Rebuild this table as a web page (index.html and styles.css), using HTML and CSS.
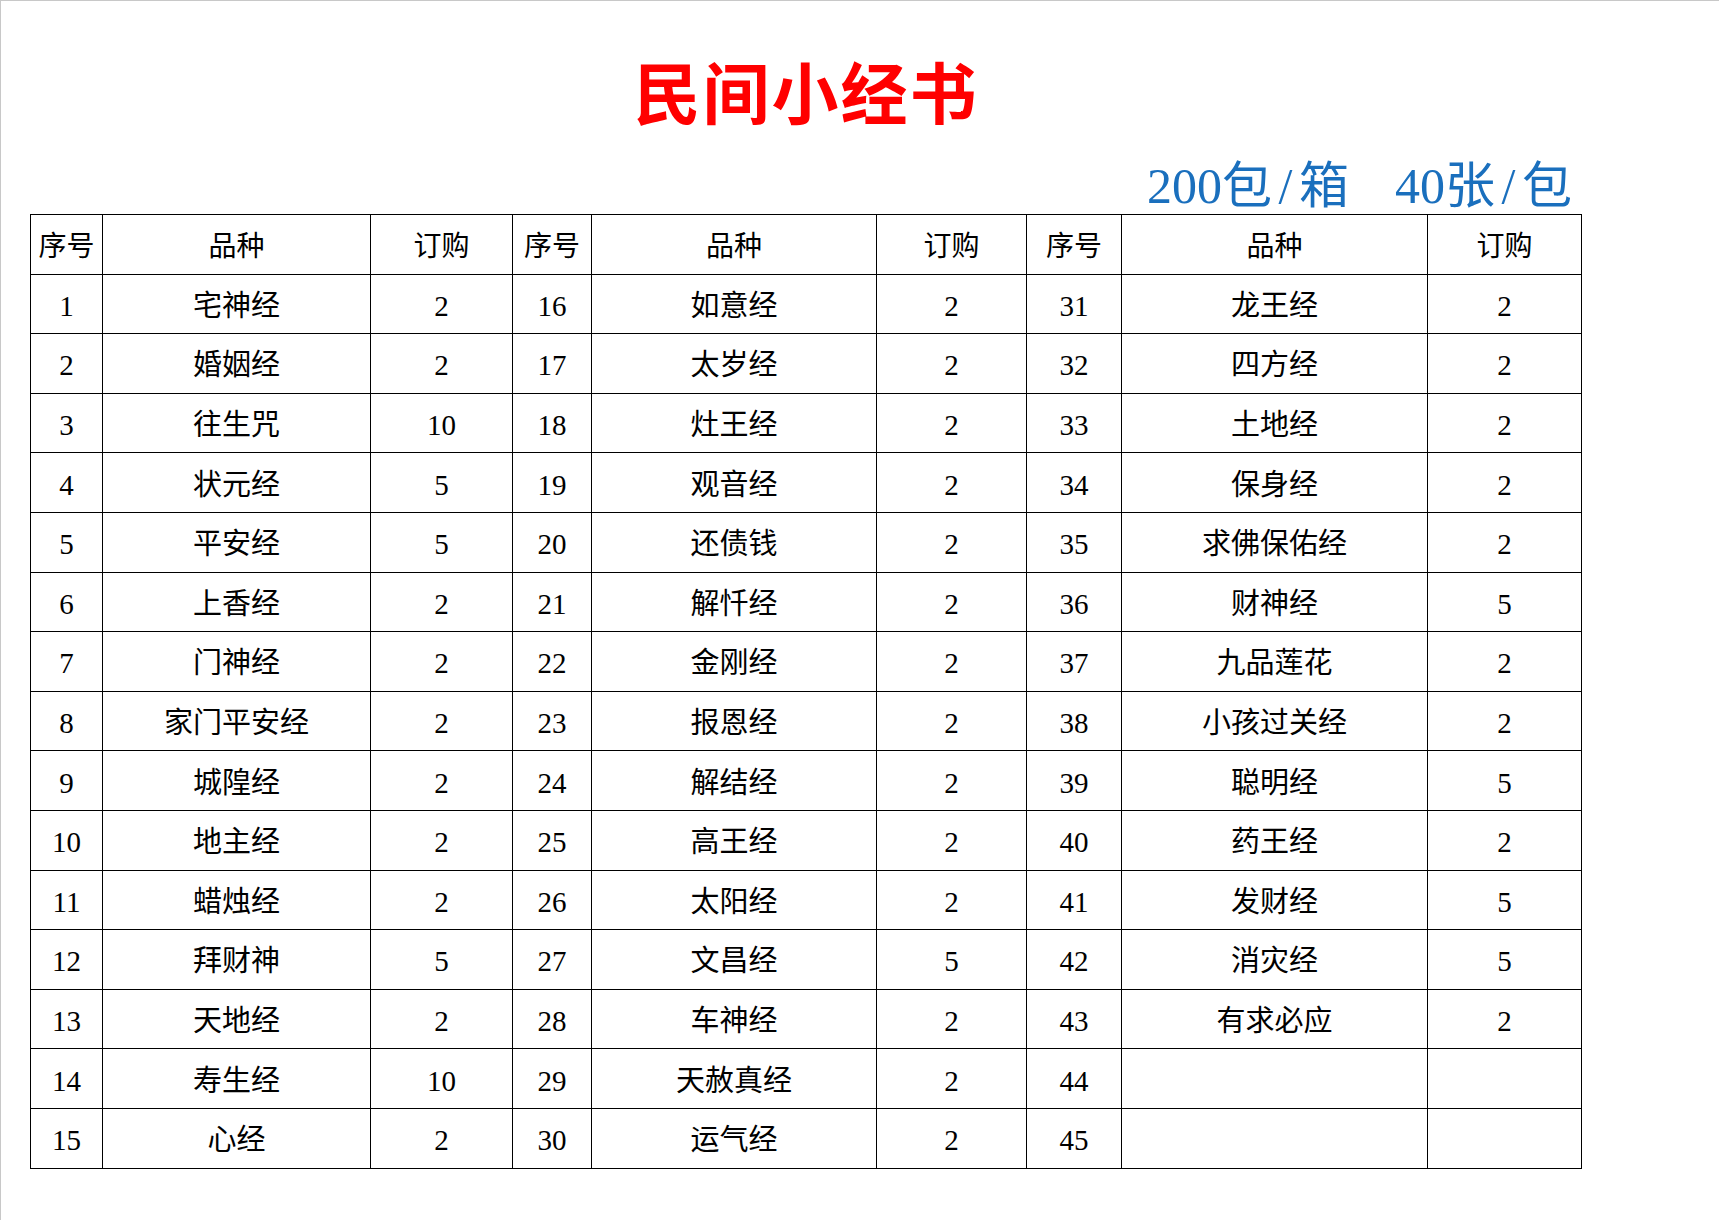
FILE: index.html
```html
<!DOCTYPE html>
<html lang="zh-CN">
<head>
<meta charset="utf-8">
<title>民间小经书</title>
<link rel="stylesheet" href="styles.css">
</head>
<body>
<div class="sheet">
  <div class="content">
    <h1 class="title">民间小经书</h1>
    <div class="spec"><span>200包<span class="slash">/</span>箱</span><span class="gap"></span><span>40张<span class="slash">/</span>包</span></div>
    <table class="grid">
      <colgroup>
        <col class="c-no"><col class="c-name1"><col class="c-qty1">
        <col class="c-no2"><col class="c-name2"><col class="c-qty2">
        <col class="c-no3"><col class="c-name3"><col class="c-qty3">
      </colgroup>
      <thead>
        <tr><th>序号</th><th>品种</th><th>订购</th><th>序号</th><th>品种</th><th>订购</th><th>序号</th><th>品种</th><th>订购</th></tr>
      </thead>
      <tbody>
        <tr><td>1</td><td>宅神经</td><td>2</td><td>16</td><td>如意经</td><td>2</td><td>31</td><td>龙王经</td><td>2</td></tr>
        <tr><td>2</td><td>婚姻经</td><td>2</td><td>17</td><td>太岁经</td><td>2</td><td>32</td><td>四方经</td><td>2</td></tr>
        <tr><td>3</td><td>往生咒</td><td>10</td><td>18</td><td>灶王经</td><td>2</td><td>33</td><td>土地经</td><td>2</td></tr>
        <tr><td>4</td><td>状元经</td><td>5</td><td>19</td><td>观音经</td><td>2</td><td>34</td><td>保身经</td><td>2</td></tr>
        <tr><td>5</td><td>平安经</td><td>5</td><td>20</td><td>还债钱</td><td>2</td><td>35</td><td>求佛保佑经</td><td>2</td></tr>
        <tr><td>6</td><td>上香经</td><td>2</td><td>21</td><td>解忏经</td><td>2</td><td>36</td><td>财神经</td><td>5</td></tr>
        <tr><td>7</td><td>门神经</td><td>2</td><td>22</td><td>金刚经</td><td>2</td><td>37</td><td>九品莲花</td><td>2</td></tr>
        <tr><td>8</td><td>家门平安经</td><td>2</td><td>23</td><td>报恩经</td><td>2</td><td>38</td><td>小孩过关经</td><td>2</td></tr>
        <tr><td>9</td><td>城隍经</td><td>2</td><td>24</td><td>解结经</td><td>2</td><td>39</td><td>聪明经</td><td>5</td></tr>
        <tr><td>10</td><td>地主经</td><td>2</td><td>25</td><td>高王经</td><td>2</td><td>40</td><td>药王经</td><td>2</td></tr>
        <tr><td>11</td><td>蜡烛经</td><td>2</td><td>26</td><td>太阳经</td><td>2</td><td>41</td><td>发财经</td><td>5</td></tr>
        <tr><td>12</td><td>拜财神</td><td>5</td><td>27</td><td>文昌经</td><td>5</td><td>42</td><td>消灾经</td><td>5</td></tr>
        <tr><td>13</td><td>天地经</td><td>2</td><td>28</td><td>车神经</td><td>2</td><td>43</td><td>有求必应</td><td>2</td></tr>
        <tr><td>14</td><td>寿生经</td><td>10</td><td>29</td><td>天赦真经</td><td>2</td><td>44</td><td></td><td></td></tr>
        <tr><td>15</td><td>心经</td><td>2</td><td>30</td><td>运气经</td><td>2</td><td>45</td><td></td><td></td></tr>
      </tbody>
    </table>
  </div>
</div>
</body>
</html>
```

FILE: styles.css
```css
html, body {
  margin: 0;
  padding: 0;
  background: #ffffff;
}

.sheet {
  width: 1718px;
  height: 1219px;
  border-left: 1px solid #c8c8c8;
  border-top: 1px solid #c8c8c8;
  overflow: hidden;
}

.content {
  width: 1552px;
  margin-left: 29px;
  display: flex;
  flex-direction: column;
}

.title {
  margin: 44px 0 0 0;
  height: 92px;
  font-family: "Noto Sans CJK SC", sans-serif;
  font-size: 67px;
  line-height: 90px;
  font-weight: 700;
  color: #ff0000;
  text-align: center;
  letter-spacing: 2px;
}

.spec {
  display: flex;
  justify-content: flex-end;
  align-items: flex-end;
  height: 77px;
  padding-right: 10px;
  font-family: "Liberation Serif", "Noto Sans CJK SC", serif;
  font-size: 50px;
  line-height: 56px;
  color: #1a6fbd;
}

.spec .slash {
  display: inline-block;
  width: 27px;
  text-align: center;
}

.spec .gap {
  width: 46px;
}

.grid {
  width: 1552px;
  border-collapse: collapse;
  table-layout: fixed;
  font-family: "Liberation Serif", "Noto Sans CJK SC", serif;
  font-size: 29px;
  color: #000000;
}

.c-no { width: 72px; }
.c-name1 { width: 268px; }
.c-qty1 { width: 142px; }
.c-no2 { width: 79px; }
.c-name2 { width: 285px; }
.c-qty2 { width: 150px; }
.c-no3 { width: 95px; }
.c-name3 { width: 306px; }
.c-qty3 { width: 154px; }

.grid th,
.grid td {
  border: 1px solid #000000;
  height: 59.6px;
  padding: 5px 0 0 0;
  box-sizing: border-box;
  text-align: center;
  vertical-align: middle;
  font-weight: 400;
  line-height: 1;
  white-space: nowrap;
}

.grid th {
  font-size: 28px;
}
```
